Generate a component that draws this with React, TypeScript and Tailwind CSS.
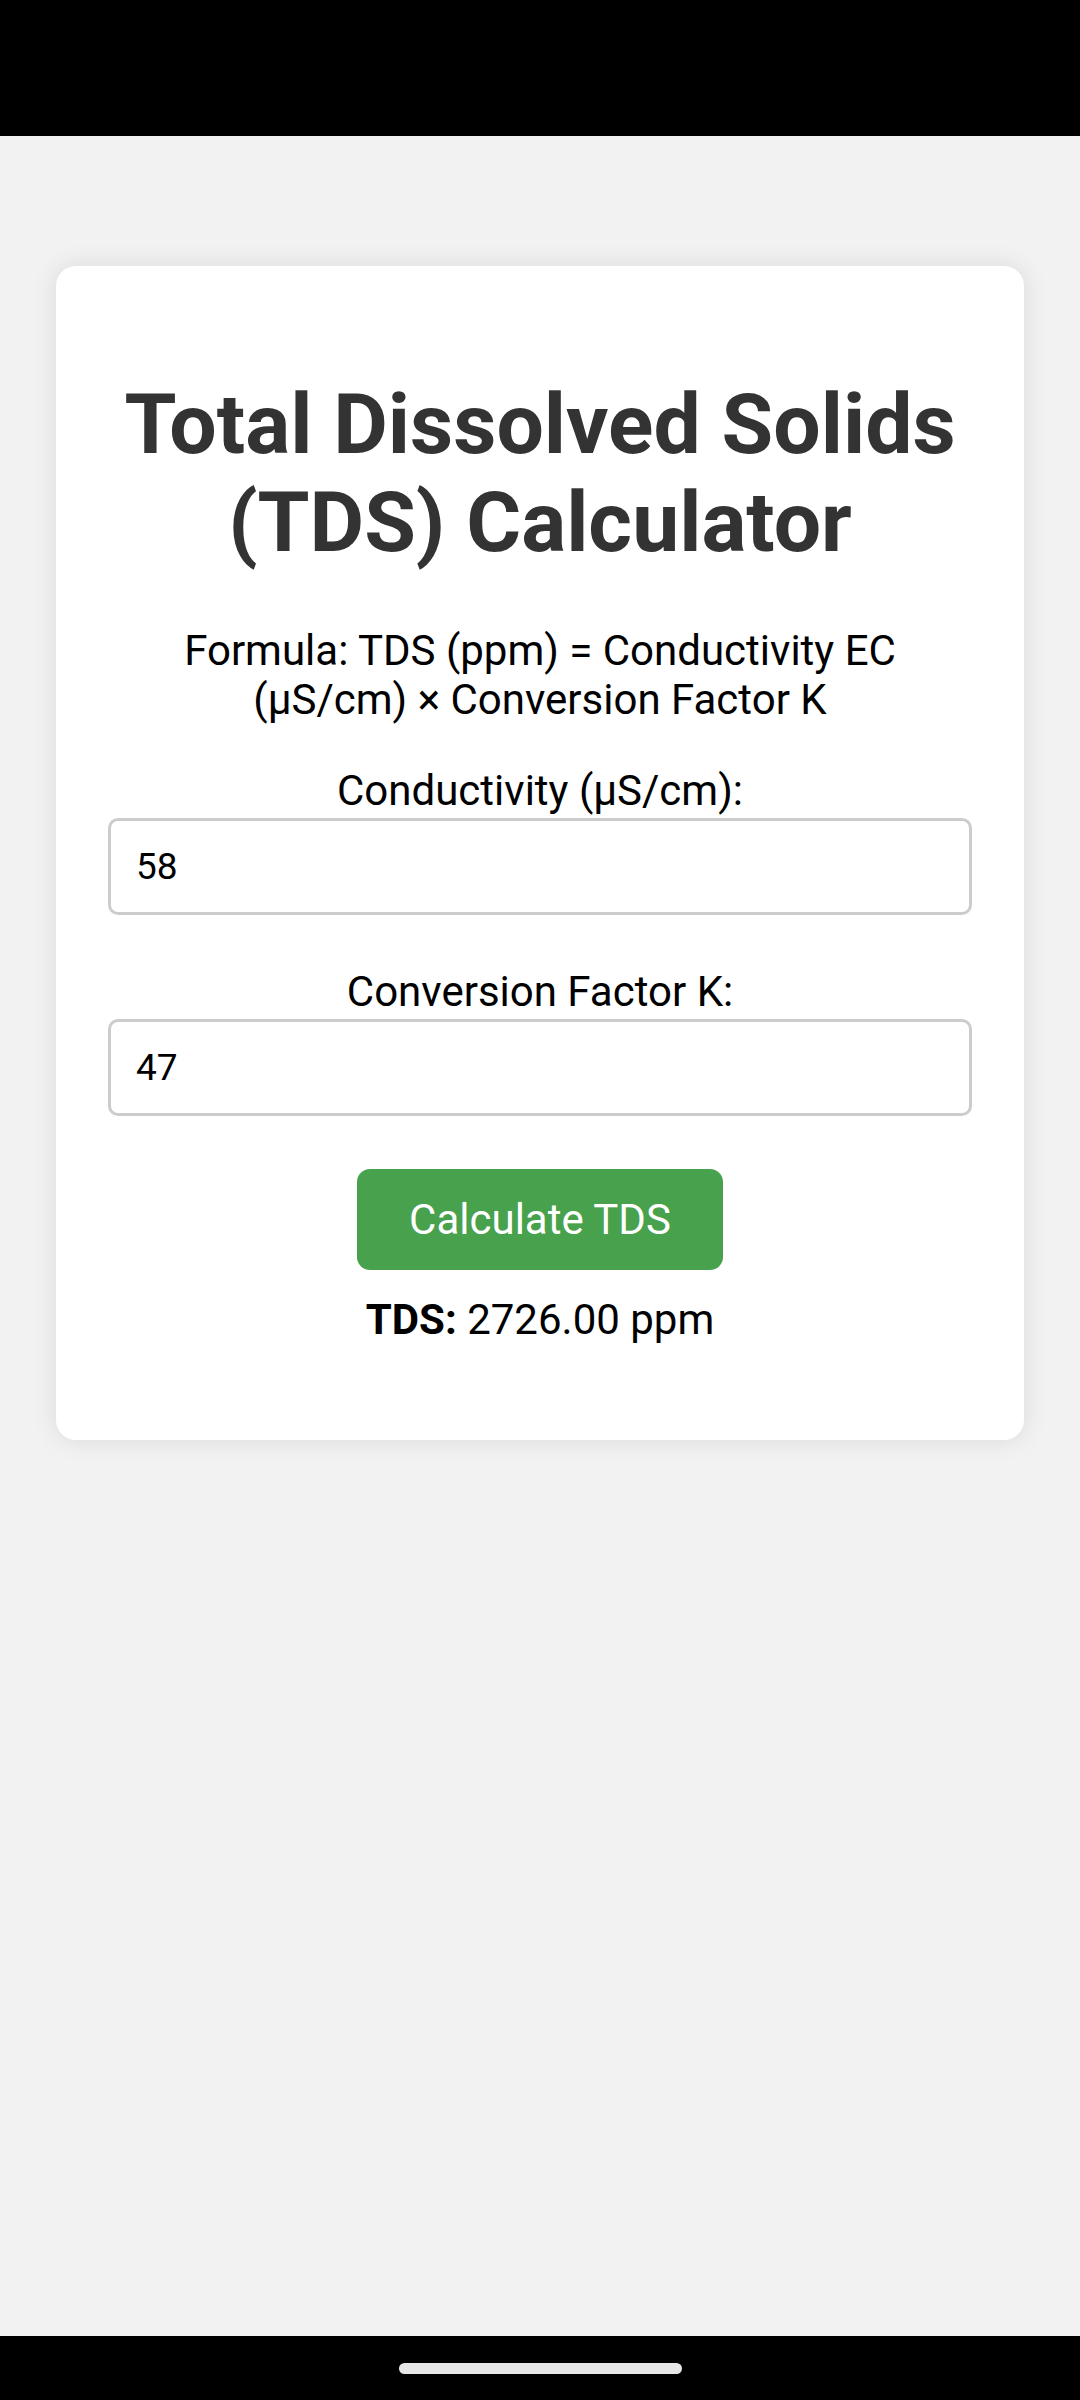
import React, { useState } from "react";

export default function App() {
  const [ec, setEc] = useState("58");
  const [k, setK] = useState("47");
  const [result, setResult] = useState("2726.00");

  const calc = () => {
    const v = parseFloat(ec) * parseFloat(k);
    setResult(isNaN(v) ? "0.00" : v.toFixed(2));
  };

  return (
    <div className="w-[1080px] h-[2400px] flex flex-col bg-[#f2f2f2] font-['Roboto',sans-serif]">
      <div className="h-[136px] bg-black shrink-0" />
      <div className="flex-1 pt-[130px] px-[56px]">
        <div className="bg-white rounded-[20px] shadow-[0_0_26px_rgba(0,0,0,0.1)] p-[52px] text-center text-black">
          <h1 className="text-[84px] leading-[98px] font-bold text-[#333] mt-[58px] mb-[54px]">
            Total Dissolved Solids (TDS) Calculator
          </h1>
          <p className="text-[42px] leading-[49px] mb-[42px] px-[10px]">
            Formula: TDS (ppm) = Conductivity EC (µS/cm) × Conversion Factor K
          </p>
          <label className="block text-[42px] leading-[49px] mb-[3px]">Conductivity (µS/cm):</label>
          <input
            value={ec}
            onChange={(e) => setEc(e.target.value)}
            className="block w-full h-[97px] border-[3px] border-[#cccccc] rounded-[10px] px-[25px] text-[37px] text-black outline-none mb-[52px] font-['Roboto',sans-serif]"
          />
          <label className="block text-[42px] leading-[49px] mb-[3px]">Conversion Factor K:</label>
          <input
            value={k}
            onChange={(e) => setK(e.target.value)}
            className="block w-full h-[97px] border-[3px] border-[#cccccc] rounded-[10px] px-[25px] text-[37px] text-black outline-none mb-[53px] font-['Roboto',sans-serif]"
          />
          <button
            onClick={calc}
            className="bg-[#48a14c] text-white text-[42px] leading-[49px] px-[52px] py-[26px] rounded-[13px] font-['Roboto',sans-serif]"
          >
            Calculate TDS
          </button>
          <p className="text-[42px] leading-[49px] mt-[25px] mb-[44px]">
            <span className="font-bold">TDS:</span> {result} ppm
          </p>
        </div>
      </div>
      <div className="h-[64px] bg-black shrink-0 flex items-center justify-center">
        <div className="w-[283px] h-[11px] rounded-full bg-[#e6e6e6]" />
      </div>
    </div>
  );
}
